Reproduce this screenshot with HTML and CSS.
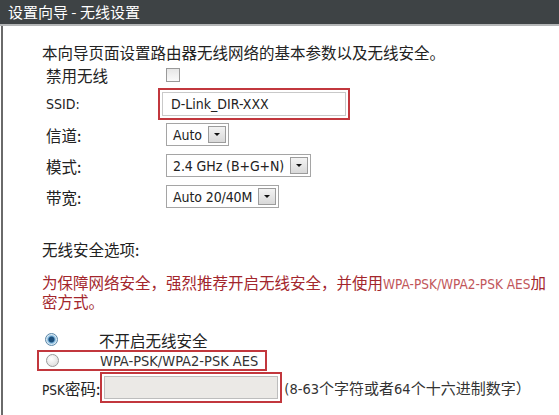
FILE: index.html
```html
<!DOCTYPE html>
<html lang="zh-CN">
<head>
  <meta charset="UTF-8" />
  <title>设置向导 - 无线设置</title>
  <link rel="stylesheet" href="styles.css">
</head>
<body>
  <div class="wizard">
    <div class="wizard-title">设置向导 - 无线设置</div>

    <div class="wizard-body">
      <p class="intro">本向导页面设置路由器无线网络的基本参数以及无线安全。</p>

      <div class="row row-disable">
        <span class="label">禁用无线</span>
        <span class="checkbox"></span>
      </div>

      <div class="row">
        <span class="label latin">SSID:</span>
        <div class="mark mark-ssid">
          <div class="textbox latin">D-Link_DIR-XXX</div>
        </div>
      </div>

      <div class="row">
        <span class="label">信道:</span>
        <div class="select latin"><span class="select-text">Auto</span><span class="select-btn"></span></div>
      </div>

      <div class="row">
        <span class="label">模式:</span>
        <div class="select latin"><span class="select-text">2.4 GHz (B+G+N)</span><span class="select-btn"></span></div>
      </div>

      <div class="row">
        <span class="label">带宽:</span>
        <div class="select latin"><span class="select-text">Auto 20/40M</span><span class="select-btn"></span></div>
      </div>

      <p class="section">无线安全选项:</p>

      <div class="warning">
        <div class="warning-line">为保障网络安全，强烈推荐开启无线安全，并使用<span class="latin wpa">WPA-PSK/WPA2-PSK AES</span>加</div>
        <div class="warning-line">密方式。</div>
      </div>

      <div class="radio-row first">
        <span class="radio checked"></span>
        <span class="radio-text">不开启无线安全</span>
      </div>
      <div class="radio-row mark mark-radio">
        <span class="radio"></span>
        <span class="radio-text latin">WPA-PSK/WPA2-PSK AES</span>
      </div>

      <div class="psk-row">
        <span class="psk-label"><span class="latin">PSK</span>密码:</span>
        <div class="mark mark-psk">
          <div class="textbox disabled"></div>
        </div>
        <span class="hint"><span class="latin">(8-63</span>个字符或者<span class="latin">64</span>个十六进制数字）</span>
      </div>
    </div>
  </div>
</body>
</html>
```

FILE: styles.css
```css
body {
  margin: 0;
  background: #fff;
  font-family: "Noto Sans CJK SC", "DejaVu Sans", sans-serif;
  color: #222;
}

.wizard {
  width: 559px;
  height: 415px;
  overflow: hidden;
}

.wizard-title {
  height: 24px;
  line-height: 24px;
  padding-left: 8px;
  background: #3e4345;
  color: #fff;
  font-size: 15px;
  border-bottom: 2px solid #b4b6b7;
}

.wizard-body {
  height: 389px;
  border-left: 2px solid #6a6a6a;
  margin-left: 1px;
  padding: 0 4px 0 39px;
}

.latin {
  font-family: "DejaVu Sans Condensed", "DejaVu Sans", sans-serif;
}

.intro {
  margin: 0;
  padding-top: 16px;
  height: 20px;
  line-height: 20px;
  font-size: 15.5px;
}

.row {
  display: flex;
  align-items: center;
  height: 31px;
  font-size: 15.5px;
}

.row-disable {
  height: 26px;
}

.label {
  width: 120px;
  padding-left: 4px;
  flex: none;
}

.label.latin {
  font-size: 14px;
}

.checkbox {
  width: 12px;
  height: 12px;
  border: 1px solid #9a9a9a;
  background: linear-gradient(#e6e6e6, #fafafa);
}

.mark {
  border: 2px solid #c2373d;
  padding: 2px;
}

.mark-ssid {
  margin-left: -8px;
  width: 184px;
}

.textbox {
  height: 22px;
  line-height: 22px;
  border: 1px solid #c9c9c9;
  padding-left: 8px;
  font-size: 14px;
  color: #222;
}

.textbox.disabled {
  background: #ebe9e6;
  border-color: #bdbdbd;
  height: 21px;
}

.select {
  display: flex;
  align-items: center;
  height: 21px;
  border: 1px solid #a5a5a5;
  background: #fff;
  font-size: 14px;
  padding: 0 2px 0 6px;
  gap: 6px;
}

.select-text {
  letter-spacing: -0.1px;
}

.select-btn {
  width: 16px;
  height: 15px;
  border: 1px solid #9c9c9c;
  background: linear-gradient(#f3f3f3, #d9d9d9);
  position: relative;
}

.select-btn::after {
  content: "";
  position: absolute;
  left: 5px;
  top: 6px;
  border-left: 3px solid transparent;
  border-right: 3px solid transparent;
  border-top: 3px solid #111;
}

.section {
  margin: 0;
  padding-top: 27px;
  font-size: 15.5px;
  line-height: 20px;
}

.warning {
  padding-top: 14px;
  font-size: 15.5px;
  color: #a3262c;
  white-space: nowrap;
}

.warning-line {
  height: 19px;
  line-height: 19px;
}

.wpa {
  color: #c1565a;
  font-size: 13.5px;
  line-height: 1;
}

.radio-row {
  display: flex;
  align-items: center;
  height: 19px;
  font-size: 15.5px;
  white-space: nowrap;
}

.radio-row.first {
  margin-top: 19px;
}

.radio {
  width: 11px;
  height: 11px;
  border-radius: 50%;
  border: 1px solid #9a9a9a;
  background: radial-gradient(circle at 40% 35%, #fff, #d6d6d6);
  margin-left: 3px;
  margin-right: 41px;
  flex: none;
}

.radio.checked {
  background: radial-gradient(circle, #1d4f7c 0 2.5px, #7ab4dc 3.5px, #d8e8f3 5px);
  border-color: #5a87a8;
}

.mark-radio {
  margin-top: 1px;
  margin-left: -5px;
  width: 226px;
  padding: 0;
  height: 17px;
}

.mark-radio .radio {
  margin-left: 7px;
}

.mark-radio .radio-text {
  font-size: 14.5px;
  color: #333;
}

.psk-row {
  display: flex;
  align-items: center;
  margin-top: 1px;
  font-size: 15.5px;
  white-space: nowrap;
}

.psk-label .latin {
  font-size: 13.5px;
}

.mark-psk {
  width: 174px;
  margin-left: 0;
}

.hint {
  margin-left: 2px;
  font-size: 15px;
  color: #333;
}

.hint .latin {
  font-size: 14.5px;
}
```
